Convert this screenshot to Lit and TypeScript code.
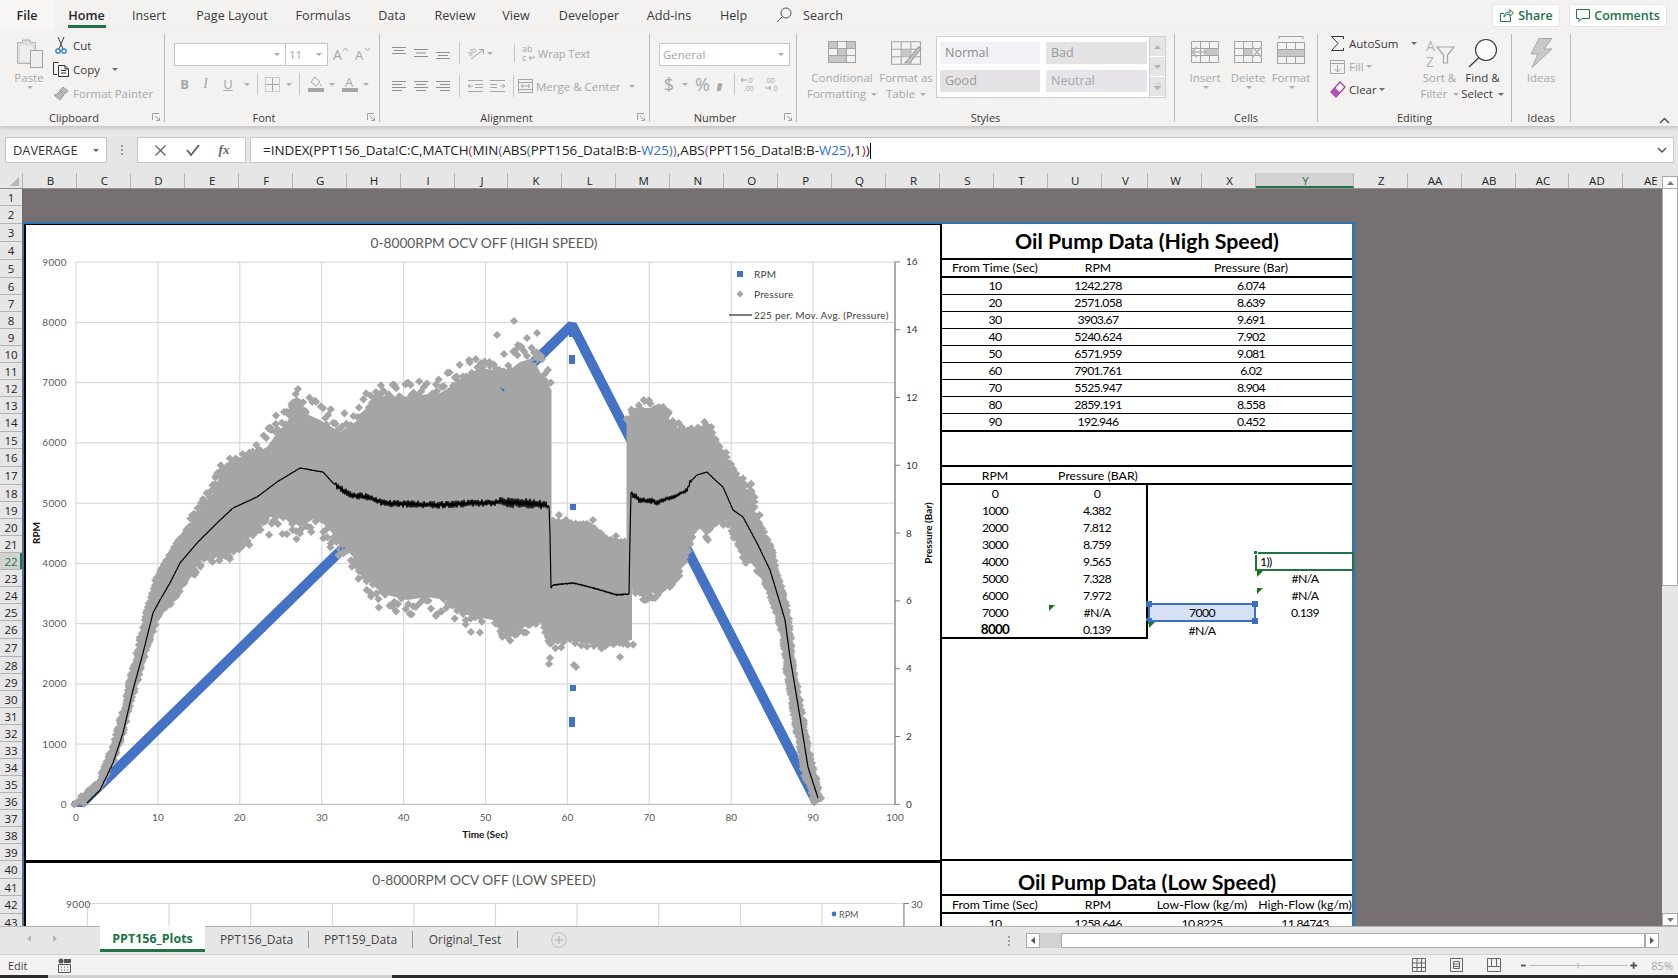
import { LitElement, html, svg, css } from 'lit'
import { customElement } from 'lit/decorators.js'

// sheet geometry, measured off the screenshot
const ROW_HEIGHTS = [17, 18, 18, 18, 18, 17, 17, 17, 17, 17, 17, 17, 17, 18, 17, 18, 18, 17, 17, 17, 17, 17, 17, 17, 17, 18, 18, 17, 17, 17, 17, 17, 17, 17, 17, 17, 17, 17, 17, 18, 17, 18, 17]
const COL_NAMES = 'B C D E F G H I J K L M N O P Q R S T U V W X Y Z AA AB AC AD AE'.split(' ')
const colWidth = (n: string) => (n === 'V' ? 46.4 : n === 'Y' ? 97.7 : 53.95)

const RIBBON_TABS: [string, number][] = [
  ['File', 54], ['Home', 65], ['Insert', 60], ['Page Layout', 106], ['Formulas', 76], ['Data', 62],
  ['Review', 64], ['View', 58], ['Developer', 88], ['Add-ins', 72], ['Help', 57],
]

// seeded so the scatter stays the same on every run
let seed = 1234567
const rnd = () => {
  seed = (seed * 16807) % 2147483647
  return seed / 2147483647
}

type P = [number, number]

const UPPER_A: P[] = [[75, 804], [100, 780], [113, 747], [123, 713], [133, 670], [143, 630], [148, 607], [157, 578], [173, 550], [182, 537], [197, 513], [213, 493], [222, 470], [233, 463], [252, 455], [267, 447], [277, 433], [287, 422], [297, 402], [302, 412], [320, 420], [340, 432], [363, 417], [377, 396], [400, 397], [440, 393], [450, 387], [463, 377], [480, 368], [507, 372], [520, 362], [533, 358], [540, 372], [551.5, 390]]
const UPPER_B: P[] = [[551.5, 522], [573, 523], [590, 525], [603, 537], [617, 543], [626.5, 540]]
const UPPER_C: P[] = [[626.5, 420], [643, 408], [660, 408], [670, 420], [680, 430], [697, 433], [707, 424], [712, 437], [727, 463], [740, 483], [750, 492], [755, 513], [770, 547], [777, 573], [787, 613], [792, 657], [800, 707], [808, 750], [817, 787], [821, 800]]
const LOWER_C: P[] = [[815, 803], [805, 773], [797, 730], [788, 677], [783, 633], [773, 600], [763, 577], [753, 560], [747, 558], [737, 540], [727, 520], [713, 523], [707, 535], [700, 520], [693, 533], [683, 560], [673, 580], [657, 590], [647, 595], [632, 590]]
const LOWER_B: P[] = [[632, 640], [620, 643], [593, 643], [573, 638], [550, 643], [543, 618], [523, 628], [507, 635], [493, 620]]
const LOWER_A: P[] = [[483, 618], [467, 615], [447, 600], [427, 597], [407, 600], [383, 594], [367, 580], [353, 557], [333, 534], [317, 517], [300, 527], [287, 517], [267, 517], [250, 537], [227, 557], [207, 554], [187, 577], [173, 600], [157, 617], [150, 637], [140, 667], [130, 704], [120, 740], [110, 767], [97, 790], [83, 805]]

const RAW_OUTLIERS: P[] = [[514, 321], [497, 335], [537, 333], [527, 338], [518, 345], [504, 354], [481, 363], [490, 366], [298, 389], [376, 392], [382, 393], [392, 398], [257, 455], [550, 658], [549, 664], [574, 665], [576, 667], [620, 657], [645, 600], [655, 598], [706, 537], [559, 515], [566, 520], [593, 520], [616, 536]]

const diamond = (x: number, y: number) => `M${x.toFixed(1)} ${(y - 4.1).toFixed(1)}l4.1 4.1-4.1 4.1-4.1-4.1z`

// markers spraying off the edge of the solid band
function scatter(pts: P[], dir: number, amp: (x: number) => number) {
  let d = ''
  for (let i = 0; i < pts.length - 1; i++) {
    const [x0, y0] = pts[i]
    const [x1, y1] = pts[i + 1]
    const n = Math.max(1, Math.floor(Math.hypot(x1 - x0, y1 - y0) / 2.5))
    for (let k = 0; k < n; k++) {
      const t = k / n
      const x = x0 + (x1 - x0) * t
      const y = y0 + (y1 - y0) * t
      const r = Math.pow(rnd(), 1.7)
      d += diamond(x + (rnd() - 0.5) * 3, y + dir * (r * amp(x) - 1))
    }
  }
  return d
}

const bandAmp = (x: number) => (x < 190 || x > 760 ? 1.5 : x < 260 ? 9 : 19)
const blockAmp = () => 3

const GRAY_POLY = [...UPPER_A, ...UPPER_B, ...UPPER_C, ...LOWER_C, ...LOWER_B, ...LOWER_A].map((p) => p.join(',')).join(' ')
const GRAY_MARKS =
  scatter(UPPER_A, -1, bandAmp) +
  scatter(UPPER_B, -1, blockAmp) +
  scatter(UPPER_C, -1, (x) => (x > 760 ? 1.5 : 10)) +
  scatter(LOWER_C, 1, (x) => (x > 760 ? 1.5 : 8)) +
  scatter(LOWER_B, 1, () => 8) +
  scatter(LOWER_A, 1, bandAmp) +
  RAW_OUTLIERS.map(([x, y]) => diamond(x, y)).join('')

const AVG_LINE: P[] = [[87, 803], [100, 790], [113, 763], [123, 733], [133, 690], [143, 653], [153, 613], [160, 600], [170, 583], [180, 563], [197, 543], [217, 523], [233, 508], [257, 497], [277, 482], [300, 468], [323, 472], [333, 483], [350, 495], [367, 497], [383, 503], [433, 505], [500, 502], [520, 503], [545, 505], [549, 506], [550, 533], [551, 588], [553, 585], [573, 583], [590, 587], [617, 595], [629, 594], [630, 537], [631, 493], [640, 500], [657, 502], [673, 497], [687, 490], [690, 482], [697, 475], [707, 472], [713, 478], [723, 487], [733, 510], [743, 517], [757, 543], [770, 570], [780, 603], [785, 620], [790, 657], [800, 717], [808, 767], [818, 798]]

const noiseAt = (x: number) => {
  if (x > 335 && x < 500) return 4
  if (x >= 500 && x < 548) return 5.5
  if (x > 631 && x < 660) return 3.6
  if (x >= 660 && x < 692) return 2.4
  if (x > 553 && x < 628) return 0.8
  return 0.25
}

const avgPath = () => {
  let d = ''
  let flip = 1
  AVG_LINE.forEach(([x, y], i) => {
    if (!i) {
      d = `M${x} ${y}`
      return
    }
    const [px, py] = AVG_LINE[i - 1]
    const n = Math.max(1, Math.floor(x - px))
    for (let k = 1; k <= n; k++) {
      const cx = px + ((x - px) * k) / n
      const cy = py + ((y - py) * k) / n
      flip = -flip
      d += `L${cx.toFixed(1)} ${(cy + flip * (0.4 + rnd() * 0.6) * noiseAt(cx)).toFixed(1)}`
    }
  })
  return d
}
const AVG_D = avgPath()

const caret = (cls = '') => html`<i class="caret ${cls}"></i>`

const lines = (rows: number[][], stroke = '#8f8f8f') => html`<svg class="ico" width="15" height="14" viewBox="0 0 15 14">
  ${rows.map(([x1, x2, y]) => svg`<path d="M${x1} ${y + 0.5}H${x2}" stroke=${stroke} fill="none"/>`)}
</svg>`

const launcher = html`<svg class="launcher" width="8" height="8" viewBox="0 0 8 8">
  <path d="M.5 7V.5H7M3 3l4 4M4.500 7.500h3v-3" fill="none" stroke="#a0a0a0"/>
</svg>`

const sheetGrid = (inner: unknown, w = 28, h = 22) => html`<svg class="ico" width=${w} height=${h} viewBox="0 0 28 22">
  <path d="M.5.5h27v21H.5zM.5 7.500h27M.5 14.500h27M9.500.5v21M18.500.5v21" fill="none" stroke="#a3a3a3"/>
  ${inner}
</svg>`

@customElement('app-root')
export class AppRoot extends LitElement {
  static styles = css`
    :host {
      display: block;
      width: 1678px;
      height: 978px;
      overflow: hidden;
      background: #f3f2f1;
      font-family: 'Open Sans', 'Noto Sans', sans-serif;
      font-size: 11.5px;
      color: #3b3a39;
    }
    .ico {
      display: block;
      flex: none;
      overflow: visible;
    }
    .caret {
      display: inline-block;
      width: 0;
      height: 0;
      border: 3px solid transparent;
      border-top: 3px solid #6b6b6b;
      border-bottom: 0;
      vertical-align: middle;
      margin-left: 2px;
    }
    .caret.off {
      border-top-color: #adadad;
    }
    .off {
      color: #a6a6a6;
    }

    /* ribbon tabs */
    .tabs {
      display: flex;
      align-items: center;
      height: 30px;
      font-size: 12.6px;
    }
    .tab {
      display: flex;
      align-items: center;
      justify-content: center;
      height: 30px;
      box-sizing: border-box;
      flex: none;
    }
    .tab.file {
      background: #f8f7f6;
      font-weight: 600;
      color: #262626;
    }
    .tab.home {
      position: relative;
      color: #262626;
      font-weight: 600;
    }
    .tab.home::after {
      content: '';
      position: absolute;
      left: 14px;
      right: 13px;
      bottom: 2px;
      height: 3px;
      background: #217346;
    }
    .search {
      display: flex;
      align-items: center;
      gap: 11px;
      margin-left: 14px;
    }
    .share-btns {
      display: flex;
      gap: 9px;
      margin-left: auto;
      margin-right: 11px;
    }
    .share {
      display: flex;
      align-items: center;
      justify-content: center;
      gap: 4px;
      height: 23px;
      box-sizing: border-box;
      background: #fff;
      border: 1px solid #e6e5e4;
      border-radius: 2px;
      color: #217346;
      font-size: 12.5px;
      font-weight: 600;
    }
    .share.a {
      width: 68px;
    }
    .share.b {
      width: 98px;
    }

    /* ribbon body */
    .ribbon {
      display: flex;
      height: 96px;
      box-sizing: border-box;
      padding-top: 4px;
      position: relative;
      z-index: 2;
      box-shadow: 0 2px 4px rgba(0, 0, 0, 0.16);
      background: #f3f2f1;
    }
    .group {
      flex: none;
      display: flex;
      flex-direction: column;
      height: 88px;
      box-sizing: border-box;
      border-right: 1px solid #b8b8b8;
    }
    .body {
      flex: 1;
      display: flex;
      min-height: 0;
    }
    .glabel {
      display: flex;
      align-items: center;
      height: 16px;
      margin-bottom: -3px;
      margin-top: -1px;
      font-size: 11px;
    }
    .glabel span {
      flex: 1;
      text-align: center;
    }
    .launcher {
      margin: 0 4px 0 4px;
    }
    .big {
      display: flex;
      flex-direction: column;
      align-items: center;
      flex: none;
      line-height: 16px;
      text-align: center;
      white-space: nowrap;
    }
    .big .icon-slot {
      display: flex;
      align-items: flex-start;
      justify-content: center;
      height: 34px;
      box-sizing: border-box;
      padding-top: 7px;
      margin-bottom: 2px;
    }
    .big .icon-slot.tall {
      padding-top: 4px;
    }
    .big .icon-slot.bracket {
      padding-top: 2px;
    }
    .clip {
      padding-left: 15px;
    }
    .clip .big {
      width: 28px;
    }
    .clip-list {
      margin: -1px 0 0 10px;
    }
    .clip-row {
      display: flex;
      align-items: center;
      gap: 4px;
      height: 24px;
    }
    .clip-row .slot {
      width: 16px;
      display: flex;
      justify-content: center;
    }
    .font-col {
      padding: 8px 0 0 9px;
      display: flex;
      flex-direction: column;
      gap: 6px;
    }
    .combo {
      display: flex;
      align-items: center;
      justify-content: space-between;
      height: 23px;
      box-sizing: border-box;
      padding: 0 5px 0 3px;
      background: #fff;
      border: 1px solid #c8c6c4;
      color: #a6a6a6;
      font-size: 11.5px;
    }
    .combo.name {
      width: 111px;
      border-right: 0;
    }
    .combo.size {
      width: 43px;
    }
    .combo.numfmt {
      width: 131px;
    }
    .tool-row {
      display: flex;
      align-items: center;
      height: 24px;
      color: #a6a6a6;
    }
    .tool-row .gsep {
      width: 1px;
      height: 22px;
      background: #c8c6c4;
      flex: none;
    }
    .glyph {
      font-size: 13px;
      text-align: center;
      flex: none;
    }
    .glyph.b {
      font-weight: 700;
      width: 21px;
      margin-left: 0;
    }
    .glyph.i {
      font-style: italic;
      font-family: 'Liberation Serif', serif;
      width: 21px;
      font-size: 14px;
    }
    .glyph.u {
      text-decoration: underline;
      width: 24px;
    }
    .glyph.comma {
      font-size: 26px;
      font-weight: 800;
      margin: -14px 0 0 6px;
      line-height: 16px;
    }
    .align-grid {
      padding: 7px 0 0 12px;
      display: flex;
      flex-direction: column;
      gap: 9px;
    }
    .align-row {
      display: flex;
      align-items: center;
      height: 24px;
      color: #a6a6a6;
    }
    .align-row .ico + .ico {
      margin-left: 7px;
    }
    .vbar {
      width: 1px;
      height: 22px;
      background: #c8c6c4;
      margin: 0 8px;
      flex: none;
    }
    .wrapcol {
      display: flex;
      align-items: center;
      gap: 2px;
      margin-left: 21px;
      padding-left: 7px;
      border-left: 1px solid #c8c6c4;
      font-size: 11px;
    }
    .mergecol {
      display: flex;
      align-items: center;
      gap: 3px;
      margin-left: -3px;
    }
    .number-col {
      padding: 8px 0 0 9px;
      display: flex;
      flex-direction: column;
      gap: 6px;
    }
    .styles {
      padding: 0 0 0 10px;
    }
    .styles .big {
      width: 70px;
      color: #a6a6a6;
    }
    .styles .big + .big {
      margin-left: -6px;
    }
    .gallery {
      display: flex;
      margin: 2px 0 0 -5px;
      height: 62px;
      box-sizing: border-box;
      background: #fff;
      border: 1px solid #d2d0ce;
    }
    .cells {
      display: grid;
      grid-template-columns: 100px 101px;
      grid-auto-rows: 22px;
      gap: 6px;
      padding: 5px 2px 0 3px;
    }
    .st {
      padding-left: 5px;
      line-height: 21px;
      font-size: 12.5px;
      color: #8e8e8e;
    }
    .st.normal {
      background: #f4f1f6;
      color: #8a8a8a;
    }
    .st.shade {
      background: #e4e2e4;
      color: #9a9a9a;
    }
    .st.tint {
      background: #e8e5ea;
      color: #a5a5a5;
    }
    .scroll3 {
      display: flex;
      flex-direction: column;
      width: 15px;
      background: #e6e5e4;
      border-left: 1px solid #d2d0ce;
    }
    .scroll3 i {
      flex: 1;
      display: flex;
      align-items: center;
      justify-content: center;
      border-bottom: 1px solid #fff;
    }
    .cellsgroup {
      padding-left: 9px;
    }
    .cellsgroup .big {
      width: 42px;
      color: #a6a6a6;
    }
    .cellsgroup .big + .big {
      margin-left: 1px;
    }
    .editing {
      padding-left: 12px;
    }
    .edit-list {
      width: 88px;
      margin-top: -2px;
    }
    .edit-row {
      display: flex;
      align-items: center;
      gap: 4px;
      height: 23px;
    }
    .edit-row .slot {
      width: 15px;
      display: flex;
      justify-content: center;
    }
    .edit-row .caret {
      margin-left: -2px;
    }
    .edit-row .caret.far {
      margin-left: 9px;
    }
    .editing .big {
      width: 43px;
    }
    .ideas {
      justify-content: center;
    }
    .ideas .big {
      width: 100%;
    }
    .collapse {
      align-self: flex-end;
      margin: 0 8px 2px auto;
    }

    /* formula bar */
    .fbar {
      display: flex;
      height: 47px;
      box-sizing: border-box;
      padding: 11px 4px 0 5px;
      background: #e6e6e6;
      align-items: flex-start;
    }
    .fbox {
      display: flex;
      align-items: center;
      height: 26px;
      box-sizing: border-box;
      background: #fff;
      border: 1px solid #c8c6c4;
      flex: none;
    }
    .namebox {
      width: 102px;
      justify-content: space-between;
      padding: 0 7px;
      font-size: 12.8px;
      color: #333;
    }
    .dots {
      width: 30px;
      display: flex;
      flex-direction: column;
      align-items: center;
      justify-content: center;
      gap: 2px;
      height: 26px;
      flex: none;
    }
    .dots i {
      width: 2px;
      height: 2px;
      background: #a0a0a0;
    }
    .fxbox {
      width: 109px;
      justify-content: space-around;
      padding: 0 6px;
    }
    .fx {
      font-family: 'Liberation Serif', serif;
      font-style: italic;
      font-weight: 700;
      font-size: 13px;
      color: #666;
    }
    .formula {
      flex: 1;
      margin-left: 4px;
      padding-left: 12px;
      font-size: 13.4px;
      color: #222;
      justify-content: space-between;
      padding-right: 6px;
      white-space: pre;
    }
    .formula .cursor {
      display: inline-block;
      width: 1px;
      height: 16px;
      background: #000;
      vertical-align: -4px;
    }
    .p-red { color: #c8143c; }
    .p-purple { color: #8a3fb0; }
    .p-green { color: #1e8a4a; }
    .p-blue { color: #2f6fce; }

    /* sheet */
    .workarea {
      display: flex;
      height: 753px;
    }
    .sheetwrap {
      width: 1662px;
      flex: none;
      display: flex;
      flex-direction: column;
    }
    .colhead {
      display: flex;
      height: 16px;
      background: #e6e6e6;
      border-bottom: 1px solid #8f8f8f;
      box-sizing: border-box;
      overflow: hidden;
      flex: none;
    }
    .corner {
      width: 23px;
      flex: none;
      display: flex;
      align-items: flex-end;
      justify-content: flex-end;
      padding: 0 3px 2px 0;
      box-sizing: border-box;
      border-right: 1px solid #b3b3b3;
    }
    .ch {
      flex: none;
      box-sizing: border-box;
      border-right: 1px solid #b3b3b3;
      padding-left: 2px;
      text-align: center;
      font-size: 11.5px;
      line-height: 15px;
      color: #222;
    }
    .ch.on {
      background: #d2d2d2;
      color: #217346;
      border-bottom: 2px solid #217346;
    }
    .sheetbody {
      display: flex;
      height: 737px;
      overflow: hidden;
    }
    .rowhead {
      width: 23px;
      flex: none;
      background: #e6e6e6;
      border-right: 1px solid #6e6e6e;
      box-sizing: border-box;
    }
    .rh {
      box-sizing: border-box;
      border-bottom: 1px solid #b3b3b3;
      text-align: center;
      font-size: 11.5px;
      color: #222;
      display: flex;
      align-items: center;
      justify-content: center;
    }
    .rh.on {
      background: #d2d2d2;
      color: #217346;
      box-shadow: inset -2px 0 0 #217346;
    }
    .canvas {
      flex: 1;
      background: #767170;
      padding-top: 33px;
      overflow: hidden;
    }
    .board {
      width: 1332px;
      box-sizing: border-box;
      border-top: 2px solid #2e75b6;
      border-right: 3px solid #2e75b6;
      border-left: 1px solid #2e75b6;
      background: #fff;
      display: grid;
      grid-template-columns: 918px 410px;
      color: #000;
    }
    .plots {
      box-sizing: border-box;
      border-left: 2px solid #000;
      border-right: 2px solid #000;
      border-top: 1px solid #000;
    }
    .plots svg {
      display: block;
    }
    .plots .low {
      border-top: 3px solid #000;
    }
    .plots text {
      font-family: Lato, 'Liberation Sans', sans-serif;
      font-size: 10px;
      fill: #595959;
    }
    .plots text.ctitle {
      font-size: 13.7px;
      text-anchor: middle;
    }
    .plots text.axt {
      font-size: 10px;
      font-weight: 700;
      fill: #111;
      text-anchor: middle;
    }
    .plots text.leg {
      fill: #404040;
      letter-spacing: 0.25px;
    }
    .grid {
      font-family: Lato, 'Liberation Sans', sans-serif;
      font-size: 12.3px;
    }
    .tr {
      display: grid;
      grid-template-columns: 106px 100px 108px 98px;
      box-sizing: border-box;
      text-align: center;
      align-items: center;
    }
    .tr.l1 {
      border-bottom: 1px solid #000;
    }
    .tr.l2 {
      border-bottom: 2px solid #000;
    }
    .tr.up {
      padding-bottom: 1px;
    }
    .tr.num {
      letter-spacing: -0.65px;
    }
    .tr .span2 {
      grid-column: span 2;
    }
    .tr .all {
      grid-column: 1 / 4;
      width: 410px;
    }
    .title {
      font-size: 21.3px;
      font-weight: 700;
      line-height: 30px;
    }
    .title.lowt {
      padding-top: 6px;
    }
    .cell {
      position: relative;
      height: 100%;
      display: flex;
      align-items: center;
      justify-content: center;
      box-sizing: border-box;
    }
    .cell.rb {
      border-right: 2px solid #000;
    }
    .cell.bb {
      border-bottom: 2px solid #000;
    }
    .cell.strong {
      font-weight: 700;
      font-size: 13.4px;
    }
    .flag::before {
      content: '';
      position: absolute;
      left: 1px;
      top: 1px;
      border: 3px solid transparent;
      border-top-color: #107c10;
      border-left-color: #107c10;
    }
    .picked {
      background: #d6e2f4;
    }
    .picked .frame {
      position: absolute;
      inset: -1px 0 -1px 0;
      border: 2px solid #3a6fc4;
      pointer-events: none;
    }
    .frame b {
      position: absolute;
      width: 6px;
      height: 6px;
      background: #3a6fc4;
    }
    .frame b:nth-child(1) { left: -4px; top: -4px; }
    .frame b:nth-child(2) { right: -4px; top: -4px; }
    .frame b:nth-child(3) { left: -4px; bottom: -4px; }
    .frame b:nth-child(4) { right: -4px; bottom: -4px; }
    .current {
      justify-content: flex-start;
      padding-left: 4px;
    }
    .current .frame {
      position: absolute;
      inset: -1px 0 -1px -1px;
      border: 2px solid #217346;
    }
    .current .frame b {
      position: absolute;
      right: -3px;
      bottom: -3px;
      width: 5px;
      height: 5px;
      background: #217346;
      border: 1px solid #fff;
      box-sizing: border-box;
    }
    .vscroll {
      width: 16px;
      flex: none;
      background: #e6e6e6;
      display: flex;
      flex-direction: column;
      padding-top: 3px;
      box-sizing: border-box;
    }
    .vbtn {
      height: 13px;
      flex: none;
      background: #fff;
      border: 1px solid #aaa;
      box-sizing: border-box;
      display: flex;
      align-items: center;
      justify-content: center;
    }
    .vthumb {
      height: 397px;
      background: #fff;
      border: 1px solid #aaa;
      border-top: 0;
      box-sizing: border-box;
      flex: none;
    }
    .vbtn.down {
      margin-top: auto;
    }

    /* sheet tabs */
    .sheettabs {
      display: flex;
      align-items: flex-start;
      height: 29px;
      box-sizing: border-box;
      background: #e6e6e6;
      border-top: 1px solid #b3b3b3;
      border-bottom: 1px solid #d2d2d2;
      font-size: 12px;
      color: #444;
    }
    .tnav {
      width: 100px;
      flex: none;
      display: flex;
      align-items: center;
      gap: 22px;
      padding: 8px 0 0 27px;
      box-sizing: border-box;
    }
    .stab {
      flex: none;
      margin-top: 4px;
      height: 17px;
      line-height: 17px;
      text-align: center;
      border-right: 1px solid #9a9a9a;
    }
    .stab.on {
      margin-top: -1px;
      height: 26px;
      line-height: 26px;
      background: #fff;
      border: 0;
      border-bottom: 3px solid #217346;
      color: #217346;
      font-weight: 700;
      font-size: 12.5px;
      box-sizing: border-box;
    }
    .plus {
      width: 16px;
      height: 16px;
      margin: 5px 0 0 33px;
      flex: none;
    }
    .hscroll {
      display: flex;
      align-items: flex-start;
      margin-left: auto;
      padding: 6px 19px 0 0;
    }
    .hdots {
      display: flex;
      flex-direction: column;
      gap: 2px;
      margin: 3px 16px 0 0;
    }
    .hdots i {
      width: 2px;
      height: 2px;
      background: #a0a0a0;
    }
    .hbtn {
      width: 14px;
      height: 15px;
      box-sizing: border-box;
      background: #fff;
      border: 1px solid #aaa;
      display: flex;
      align-items: center;
      justify-content: center;
      flex: none;
    }
    .htrack {
      width: 21px;
      height: 15px;
      background: #d2d2d2;
      flex: none;
    }
    .hthumb {
      width: 584px;
      height: 15px;
      background: #fff;
      border: 1px solid #aaa;
      box-sizing: border-box;
      flex: none;
    }

    /* status bar */
    .status {
      display: flex;
      align-items: center;
      height: 20px;
      font-size: 11px;
      padding-left: 8px;
      color: #444;
    }
    .status .macro {
      margin-left: 30px;
    }
    .views {
      display: flex;
      align-items: center;
      margin-left: auto;
      padding-right: 5px;
    }
    .views .ico + .ico {
      margin-left: 24px;
    }
    .zoomer {
      display: flex;
      align-items: center;
      margin-left: 20px;
    }
    .pct {
      color: #a6a6a6;
      margin-left: 14px;
      font-size: 11px;
    }
    .strip {
      display: flex;
      height: 3px;
      background: #2b2b2b;
    }
    .strip i {
      margin-left: 48px;
      width: 344px;
      background: #cfcfcf;
    }
  `

  private leftChart() {
    const vx = Array.from({ length: 11 }, (_, i) => 76 + i * 81.9)
    const hy = Array.from({ length: 10 }, (_, i) => 804.3 - i * 60.25)
    const rightTicks = Array.from({ length: 9 }, (_, i) => [804.3 - i * 67.8, i * 2])
    return svg`
      <svg width="914" height="635" viewBox="26 225 914 635">
        <text class="ctitle" x="484" y="248">0-8000RPM OCV OFF (HIGH SPEED)</text>
        ${vx.map((x) => svg`<path d="M${x} 262V804" stroke="#d9d9d9" stroke-width="1.2"/>`)}
        ${hy.map((y) => svg`<path d="M76 ${y}H895" stroke="#d9d9d9" stroke-width="1.2"/>`)}
        <path d="M76 804.5H895" stroke="#bfbfbf" stroke-width="1.2"/>
        <path d="M895 262V805" stroke="#808080" stroke-width="1.2"/>
        ${rightTicks.map(([y, v]) => svg`
          <path d="M895 ${y}h5" stroke="#808080"/>
          <text x="906" y=${y + 3.5} style="fill:#333">${v}</text>`)}
        ${hy.map((y, i) => svg`<text x="67" y=${y + 3.5} text-anchor="end" style="letter-spacing:.4px">${i * 1000}</text>`)}
        ${vx.map((x, i) => svg`<text x=${x} y="821" text-anchor="middle">${i * 10}</text>`)}
        <text class="axt" x="485" y="838">Time (Sec)</text>
        <text class="axt" transform="translate(40 533) rotate(-90)">RPM</text>
        <text class="axt" transform="translate(932 533) rotate(-90)">Pressure (Bar)</text>

        <rect x="72" y="801" width="13" height="6" fill="#4472c4"/>
        <path d="M82 803L572 325L817 803" fill="none" stroke="#4472c4" stroke-width="10" stroke-linejoin="bevel"/>
        <rect x="569" y="330" width="6" height="7" fill="#4472c4"/>
        <rect x="569" y="355" width="6" height="9" fill="#4472c4"/>
        <rect x="570" y="504" width="6" height="6" fill="#4472c4"/>
        <rect x="570" y="685" width="6" height="6" fill="#4472c4"/>
        <rect x="569" y="717" width="6" height="10" fill="#4472c4"/>

        <polygon points=${GRAY_POLY} fill="#a5a5a5"/>
        <path d=${GRAY_MARKS} fill="#a5a5a5"/>
        <path d="M500 387l5 3-2 2zM531 362l5-2 1 3z" fill="#4472c4"/>
        <path d="M340 547l3 1-3 3zM622 426l5 3-3 4z" fill="#4472c4"/>
        <path d=${AVG_D} fill="none" stroke="#000" stroke-width="1.200" stroke-linejoin="bevel"/>

        <rect x="737" y="271" width="6" height="6" fill="#4472c4"/>
        <text class="leg" x="754" y="278">RPM</text>
        <path d="M740 290.500l3.500 3.500-3.500 3.500-3.500-3.500z" fill="#a5a5a5"/>
        <text class="leg" x="754" y="298">Pressure</text>
        <path d="M729 315H752" stroke="#000" stroke-width="1"/>
        <text class="leg" x="754" y="319">225 per. Mov. Avg. (Pressure)</text>
      </svg>`
  }

  private lowChart() {
    const vx = Array.from({ length: 11 }, (_, i) => 87.5 + i * 81.6)
    return svg`
      <svg class="low" width="914" height="80" viewBox="26 862 914 80">
        <text class="ctitle" x="484" y="884">0-8000RPM OCV OFF (LOW SPEED)</text>
        ${vx.map((x) => svg`<path d="M${x} 902V926" stroke="#d9d9d9" stroke-width="1.2"/>`)}
        <path d="M87 902.500H904" stroke="#d9d9d9" stroke-width="1.2"/>
        <path d="M904 902v24M904 902.500h5" stroke="#808080" fill="none"/>
        <text x="66" y="906.500" style="letter-spacing:.4px">9000</text>
        <text x="911" y="906.500">30</text>
        <circle cx="834" cy="913" r="2.400" fill="#4472c4"/>
        <text x="839" y="916.500" style="font-size:9px">RPM</text>
      </svg>`
  }

  private highRows() {
    const data = [
      ['10', '1242.278', '6.074'], ['20', '2571.058', '8.639'], ['30', '3903.67', '9.691'],
      ['40', '5240.624', '7.902'], ['50', '6571.959', '9.081'], ['60', '7901.761', '6.02'],
      ['70', '5525.947', '8.904'], ['80', '2859.191', '8.558'], ['90', '192.946', '0.452'],
    ]
    return data.map((r, i) => {
      const last = i === data.length - 1
      return html`<div class="tr num up ${last ? 'l2' : 'l1'}" style="height:${last ? 18 : 17}px">
        <div>${r[0]}</div><div>${r[1]}</div><div class="span2">${r[2]}</div>
      </div>`
    })
  }

  private pressureRows() {
    const data: [string, string, number][] = [
      ['0', '0', 17], ['1000', '4.382', 17], ['2000', '7.812', 17], ['3000', '8.759', 17], ['4000', '9.565', 17],
      ['5000', '7.328', 17], ['6000', '7.972', 17], ['7000', '#N/A', 17], ['8000', '0.139', 18],
    ]
    const sideCells = (i: number) => {
      if (i === 4) return html`<div></div><div class="cell current"><span>1))</span><span class="frame"><b></b></span></div>`
      if (i === 5) return html`<div></div><div class="cell flag">#N/A</div>`
      if (i === 6) return html`<div></div><div class="cell flag">#N/A</div>`
      if (i === 7) return html`<div class="cell picked">7000<span class="frame"><b></b><b></b><b></b><b></b></span></div><div class="cell">0.139</div>`
      if (i === 8) return html`<div class="cell flag">#N/A</div><div></div>`
      return html`<div></div><div></div>`
    }
    return data.map(([a, b, h], i) => {
      const end = i === data.length - 1
      return html`<div class="tr num" style="height:${h}px">
        <div class="cell ${end ? 'bb strong' : ''}">${a}</div>
        <div class="cell rb ${end ? 'bb' : ''} ${i === 7 ? 'flag' : ''}">${b}</div>
        ${sideCells(i)}
      </div>`
    })
  }

  private tables() {
    return html`<div class="grid">
      <div class="tr l2 title" style="height:36px"><div class="all">Oil Pump Data (High Speed)</div></div>
      <div class="tr l2 up" style="height:18px">
        <div>From Time (Sec)</div><div>RPM</div><div class="span2">Pressure (Bar)</div>
      </div>
      ${this.highRows()}
      <div class="tr l2" style="height:35px"></div>
      <div class="tr l2" style="height:18px"><div>RPM</div><div>Pressure (BAR)</div></div>
      ${this.pressureRows()}
      <div class="tr l2" style="height:222px"></div>
      <div class="tr l2 title lowt" style="height:35px"><div class="all">Oil Pump Data (Low Speed)</div></div>
      <div class="tr l2" style="height:18px">
        <div>From Time (Sec)</div><div>RPM</div><div>Low-Flow (kg/m)</div><div>High-Flow (kg/m)</div>
      </div>
      <div class="tr num" style="height:18px">
        <div>10</div><div>1258.646</div><div>10.8225</div><div>11.84743</div>
      </div>
    </div>`
  }

  private ribbon() {
    const gray = '#a6a6a6'
    return html`<div class="ribbon">
      <div class="group" style="width:165px">
        <div class="body clip">
          <div class="big off">
            <div class="icon-slot tall">
              <svg class="ico" width="27" height="30" viewBox="0 0 27 30">
                <path d="M1.500 4.500h5V2h8v2.500h5v21h-18z" fill="#dedddc" stroke="#b5b5b5"/>
                <path d="M4 7.500h13v16H4z" fill="#efeeed"/>
                <rect x="14.500" y="12.500" width="12" height="17" fill="#efeeed" stroke="#a6a6a6"/>
              </svg>
            </div>
            <span>Paste</span>
            ${caret('off')}
          </div>
          <div class="clip-list">
            <div class="clip-row">
              <span class="slot"><svg class="ico" width="12" height="17" viewBox="0 0 12 17">
                <path d="M3 0l5 12M9 0L4 12" fill="none" stroke="#444" stroke-width="1"/>
                <circle cx="3" cy="14" r="2.200" fill="none" stroke="#2b7cd3" stroke-width="1.300"/>
                <circle cx="9" cy="14" r="2.200" fill="none" stroke="#2b7cd3" stroke-width="1.300"/>
              </svg></span>
              <span>Cut</span>
            </div>
            <div class="clip-row">
              <span class="slot"><svg class="ico" width="16" height="16" viewBox="0 0 16 16">
                <path d="M5.500 1.500H.5v12h3.500M5.500 4.500v11h10V8l-3.500-3.500zM12 4.500V8h3.500M8 9.500h5M8 12h5" fill="none" stroke="#333"/>
              </svg></span>
              <span>Copy</span><i class="caret" style="margin-left:8px"></i>
            </div>
            <div class="clip-row off">
              <span class="slot"><svg class="ico" width="16" height="15" viewBox="0 0 16 15">
                <path d="M10 1l5 4-3 3-5-4zM7 5l4 4-4 5-6-5 3-1z" fill="#b8b8b8" stroke="#9c9c9c"/>
              </svg></span>
              <span>Format Painter</span>
            </div>
          </div>
        </div>
        <div class="glabel"><span>Clipboard</span>${launcher}</div>
      </div>

      <div class="group" style="width:215px">
        <div class="body font-col">
          <div class="tool-row">
            <div class="combo name"><span></span>${caret('off')}</div>
            <div class="combo size"><span>11</span>${caret('off')}</div>
            <svg class="ico" style="margin-left:5px" width="38" height="16" viewBox="0 0 38 16">
              <text x="0" y="14" font-size="14" fill=${gray}>A</text><path d="M10 5l2.500-3 2.500 3" fill="none" stroke=${gray}/>
              <text x="22" y="14" font-size="13" fill=${gray}>A</text><path d="M32 2l2.500 3 2.500-3" fill="none" stroke=${gray}/>
            </svg>
          </div>
          <div class="tool-row">
            <span class="glyph b">B</span>
            <span class="glyph i">I</span>
            <span class="glyph u">U</span><i class="caret off" style="margin-left:4px"></i>
            <span class="gsep" style="margin:0 7px 0 7px"></span>
            <svg class="ico" width="15" height="15" viewBox="0 0 15 15">
              <path d="M.5.5h14v14H.5z" fill="none" stroke=${gray} stroke-dasharray="1 1"/>
              <path d="M7.500 1v13M1 7.500h13" stroke=${gray}/>
            </svg><i class="caret off" style="margin-left:6px"></i>
            <span class="gsep" style="margin:0 8px 0 7px"></span>
            <svg class="ico" width="16" height="16" viewBox="0 0 16 16">
              <path d="M7 1l5 5-4 4-5-4zM12 8l1.500 2.500" fill="none" stroke=${gray}/>
              <rect x="0" y="12" width="16" height="4" fill=${gray}/>
            </svg><i class="caret off" style="margin-left:5px"></i>
            <svg class="ico" style="margin-left:7px" width="16" height="16" viewBox="0 0 16 16">
              <text x="3" y="11" font-size="13" fill=${gray}>A</text>
              <rect x="0" y="12" width="16" height="4" fill=${gray}/>
            </svg><i class="caret off" style="margin-left:5px"></i>
          </div>
        </div>
        <div class="glabel"><span>Font</span>${launcher}</div>
      </div>

      <div class="group" style="width:270px">
        <div class="body align-grid">
          <div class="align-row">
            ${lines([[0, 14, 1], [2, 12, 4], [0, 14, 7]])}
            ${lines([[0, 14, 3], [2, 12, 6.5], [0, 14, 10]])}
            ${lines([[0, 14, 6], [2, 12, 9], [0, 14, 12]])}
            <span class="vbar"></span>
            <svg class="ico" width="17" height="16" viewBox="0 0 17 16">
              <text x="0" y="9" font-size="8" fill=${gray} transform="rotate(-40 5 8)">ab</text>
              <path d="M3 14L15 5M11 4.500h4.500V9" fill="none" stroke=${gray}/>
            </svg>
            ${caret('off')}
            <span class="wrapcol">
              <svg class="ico" width="14" height="18" viewBox="0 0 14 18">
                <text x="0" y="8" font-size="9" fill=${gray}>ab</text>
                <text x="0" y="17" font-size="9" fill=${gray}>c</text>
                <path d="M7 14h5v-2M7 14l2-2M7 14l2 2" fill="none" stroke=${gray}/>
              </svg>
              Wrap Text
            </span>
          </div>
          <div class="align-row">
            ${lines([[0, 14, 2], [0, 10, 5], [0, 14, 8], [0, 10, 11]])}
            ${lines([[0, 14, 2], [2, 12, 5], [0, 14, 8], [2, 12, 11]])}
            ${lines([[0, 14, 2], [4, 14, 5], [0, 14, 8], [4, 14, 11]])}
            <span class="vbar"></span>
            <svg class="ico" width="15" height="14" viewBox="0 0 15 14">
              <path d="M0 1.500h15M7 5.500h8M7 8.500h8M0 12.500h15M5 7H0l2.500-2M0 7l2.500 2" fill="none" stroke=${gray}/>
            </svg>
            <svg class="ico" style="margin-left:7px" width="15" height="14" viewBox="0 0 15 14">
              <path d="M0 1.500h15M0 5.500h7M0 8.500h7M0 12.500h15M10 7h5l-2.500-2M15 7l-2.500 2" fill="none" stroke=${gray}/>
            </svg>
            <span class="vbar" style="margin:0 7px 0 8px"></span>
            <span class="mergecol">
              <svg class="ico" width="15" height="14" viewBox="0 0 15 14">
                <path d="M.5.5h14v13H.5zM.5 3.500h14M.5 10.500h14M3 7h9M3 7l2-2M3 7l2 2M12 7l-2-2M12 7l-2 2" fill="none" stroke=${gray}/>
              </svg>
              Merge &amp; Center <i class="caret off" style="margin-left:5px"></i>
            </span>
          </div>
        </div>
        <div class="glabel"><span>Alignment</span>${launcher}</div>
      </div>

      <div class="group" style="width:147px">
        <div class="body number-col">
          <div class="tool-row">
            <div class="combo numfmt"><span>General</span>${caret('off')}</div>
          </div>
          <div class="tool-row" style="padding-left:2px">
            <span class="glyph" style="font-size:18px;width:16px">$</span><i class="caret off" style="margin-left:5px"></i>
            <span class="glyph" style="font-size:18px;margin-left:7px">%</span>
            <span class="glyph comma">,</span>
            <span class="gsep" style="margin:0 6px 0 10px"></span>
            <svg class="ico" width="39" height="16" viewBox="0 0 39 16">
              <text x="6" y="7" font-size="7" fill=${gray}>.0</text>
              <path d="M0 4h6M0 4l2-2M0 4l2 2" fill="none" stroke=${gray}/>
              <text x="3" y="15" font-size="7" fill=${gray}>.00</text>
              <text x="24" y="7" font-size="7" fill=${gray}>.00</text>
              <path d="M24 12h6M30 12l-2-2M30 12l-2 2" fill="none" stroke=${gray}/>
              <text x="31" y="15" font-size="7" fill=${gray}>.0</text>
            </svg>
          </div>
        </div>
        <div class="glabel"><span>Number</span>${launcher}</div>
      </div>

      <div class="group" style="width:378px">
        <div class="body styles">
          <div class="big">
            <div class="icon-slot">
              ${sheetGrid(svg`<path d="M1 1h8v6H1zM10 8h8v6h-8zM1 15h17v6H1zM19 1h8v6h-8z" fill="#c6c6c6"/>`)}
            </div>
            <span>Conditional</span>
            <span>Formatting ${caret('off')}</span>
          </div>
          <div class="big">
            <div class="icon-slot">
              ${sheetGrid(svg`<path d="M10 8h8v6h-8z" fill="#c6c6c6"/><path d="M26 5L17 16l-4 4c3 1 6 0 7-3l8-10z" fill="#c6c6c6" stroke="#9c9c9c"/>`, 30, 24)}
            </div>
            <span>Format as</span>
            <span>Table ${caret('off')}</span>
          </div>
          <div class="gallery">
            <div class="cells">
              <div class="st normal">Normal</div>
              <div class="st shade">Bad</div>
              <div class="st shade">Good</div>
              <div class="st tint">Neutral</div>
            </div>
            <div class="scroll3">
              <i><svg width="7" height="4" viewBox="0 0 7 4"><path d="M0 4l3.500-4L7 4z" fill="#b5b5b5"/></svg></i>
              <i><svg width="7" height="4" viewBox="0 0 7 4"><path d="M0 0l3.500 4L7 0z" fill="#b5b5b5"/></svg></i>
              <i><svg width="7" height="7" viewBox="0 0 7 7"><path d="M0 .5h7M0 3l3.500 4L7 3z" fill="#b5b5b5" stroke="#b5b5b5" stroke-width=".5"/></svg></i>
            </div>
          </div>
        </div>
        <div class="glabel"><span>Styles</span></div>
      </div>

      <div class="group" style="width:143px">
        <div class="body cellsgroup">
          <div class="big">
            <div class="icon-slot">
              ${sheetGrid(svg`<path d="M13 8h15v6H13z" fill="#c6c6c6"/><path d="M16 11H1M1 11l5-5M1 11l5 5" fill="none" stroke="#b5b5b5" stroke-width="1.500"/>`, 30, 22)}
            </div>
            <span>Insert</span>
            ${caret('off')}
          </div>
          <div class="big">
            <div class="icon-slot">
              ${sheetGrid(svg`<path d="M10 8h9v6h-9z" fill="#c6c6c6"/><path d="M18 5l10 12M28 5L18 17" fill="none" stroke="#b5b5b5" stroke-width="1.500"/>`, 30, 22)}
            </div>
            <span>Delete</span>
            ${caret('off')}
          </div>
          <div class="big">
            <div class="icon-slot bracket">
              <svg class="ico" width="28" height="28" viewBox="0 0 28 28">
                <path d="M.5 6.500h27v21H.5zM.5 13.500h27M.5 20.500h27M9.500 6.500v21M18.500 6.500v21M2 .5h24M2 0v3M26 0v3" fill="none" stroke="#a3a3a3"/>
                <path d="M1 14h26v6H1z" fill="#c6c6c6"/>
              </svg>
            </div>
            <span>Format</span>
            ${caret('off')}
          </div>
        </div>
        <div class="glabel"><span>Cells</span></div>
      </div>

      <div class="group" style="width:194px">
        <div class="body editing">
          <div class="edit-list">
            <div class="edit-row">
              <span class="slot"><svg class="ico" width="13" height="15" viewBox="0 0 13 15">
                <path d="M12.500 3V.5H.5L7 7.500.5 14.500h12V12" fill="none" stroke="#333"/>
              </svg></span>
              <span>AutoSum</span>
              <i class="caret far"></i>
            </div>
            <div class="edit-row off">
              <span class="slot"><svg class="ico" width="15" height="14" viewBox="0 0 15 14">
                <path d="M.5.5h14v13H.5zM.5 3.500h14M7.500 5v7M4.500 9l3 3 3-3" fill="none" stroke="#a6a6a6"/>
              </svg></span>
              <span>Fill</span>${caret('off')}
            </div>
            <div class="edit-row">
              <span class="slot"><svg class="ico" width="16" height="17" viewBox="0 0 16 17">
                <path d="M10 1l5 5-9 10-5-5z" fill="#fff" stroke="#a83ea8" stroke-width="1.300"/>
                <path d="M5 6.500l5 5-4 4.500-5-5z" fill="#b74fb7"/>
              </svg></span>
              <span>Clear</span>${caret('')}
            </div>
          </div>
          <div class="big off">
            <div class="icon-slot tall">
              <svg class="ico" width="30" height="30" viewBox="0 0 30 30">
                <text x="1" y="13" font-size="14" fill="#b5b5b5">A</text>
                <text x="1" y="29" font-size="14" fill="#b5b5b5">Z</text>
                <path d="M12 9h17l-6.500 8v8h-4v-8z" fill="none" stroke="#a6a6a6" stroke-width="1.200"/>
              </svg>
            </div>
            <span>Sort &amp;</span>
            <span>Filter ${caret('off')}</span>
          </div>
          <div class="big">
            <div class="icon-slot tall">
              <svg class="ico" width="30" height="30" viewBox="0 0 30 30">
                <circle cx="18" cy="12" r="10.500" fill="#fbfbfb" stroke="#333" stroke-width="1.100"/>
                <path d="M10.500 20L1 29" stroke="#333" stroke-width="1.100"/>
              </svg>
            </div>
            <span>Find &amp;</span>
            <span>Select ${caret('')}</span>
          </div>
        </div>
        <div class="glabel"><span>Editing</span></div>
      </div>

      <div class="group" style="width:59px">
        <div class="body ideas">
          <div class="big off">
            <div class="icon-slot tall">
              <svg class="ico" width="23" height="30" viewBox="0 0 23 30">
                <path d="M9 .5h13L14 11h8L2 29.500 8 16H1z" fill="#c9c9c9" stroke="#a8a8a8"/>
              </svg>
            </div>
            <span>Ideas</span>
          </div>
        </div>
        <div class="glabel"><span>Ideas</span></div>
      </div>

      <svg class="collapse" width="11" height="7" viewBox="0 0 11 7">
        <path d="M1 6l4.500-4.500L10 6" fill="none" stroke="#555" stroke-width="1.500"/>
      </svg>
    </div>`
  }

  render() {
    return html`
      <div class="tabs">
        ${RIBBON_TABS.map(([name, w]) => html`<div
          class="tab ${name === 'File' ? 'file' : name === 'Home' ? 'home' : ''}"
          style="width:${w}px"
        >${name}</div>`)}
        <div class="search">
          <svg class="ico" width="16" height="16" viewBox="0 0 16 16">
            <circle cx="10" cy="6" r="5" fill="none" stroke="#555"/>
            <path d="M6.500 9.500L1 15" stroke="#555"/>
          </svg>
          <span>Search</span>
        </div>
        <div class="share-btns">
          <div class="share a">
            <svg class="ico" width="15" height="14" viewBox="0 0 15 14">
              <path d="M5 5.500H1.500v8h10V9M5 9c0-4 3-5 6-5V1.500l3.500 3.500L11 8.500V6C8 6 6 7 5 9z" fill="none" stroke="#217346"/>
            </svg>
            Share
          </div>
          <div class="share b">
            <svg class="ico" width="14" height="13" viewBox="0 0 14 13">
              <path d="M.5.5h13v9H6L3 12.500V9.500H.5z" fill="none" stroke="#217346"/>
            </svg>
            Comments
          </div>
        </div>
      </div>

      ${this.ribbon()}

      <div class="fbar">
        <div class="fbox namebox"><span>DAVERAGE</span>${caret('')}</div>
        <div class="dots"><i></i><i></i><i></i></div>
        <div class="fbox fxbox">
          <svg class="ico" width="13" height="13" viewBox="0 0 13 13"><path d="M1.500 1.500l10 10M11.500 1.500l-10 10" stroke="#666" stroke-width="1.400"/></svg>
          <svg class="ico" width="14" height="12" viewBox="0 0 14 12"><path d="M1 6l4 5 8-10" fill="none" stroke="#666" stroke-width="2"/></svg>
          <span class="fx">fx</span>
        </div>
        <div class="fbox formula">
          <span>=INDEX(PPT156_Data!C:C,MATCH<span class="p-red">(</span>MIN<span class="p-purple">(</span>ABS<span class="p-green">(</span>PPT156_Data!B:B-<span class="p-blue">W25</span><span class="p-green">)</span><span class="p-purple">)</span>,ABS<span class="p-purple">(</span>PPT156_Data!B:B-<span class="p-blue">W25</span><span class="p-purple">)</span>,1<span class="p-red">)</span>)<span class="cursor"></span></span>
          <svg class="ico" width="10" height="6" viewBox="0 0 10 6"><path d="M1 1l4 4 4-4" fill="none" stroke="#555" stroke-width="1.500"/></svg>
        </div>
      </div>

      <div class="workarea">
        <div class="sheetwrap">
          <div class="colhead">
            <div class="corner">
              <svg width="9" height="9" viewBox="0 0 9 9"><path d="M9 0v9H0z" fill="#b5b5b5"/></svg>
            </div>
            ${COL_NAMES.map((n) => html`<div class="ch ${n === 'Y' ? 'on' : ''}" style="width:${colWidth(n)}px">${n}</div>`)}
          </div>
          <div class="sheetbody">
            <div class="rowhead">
              ${ROW_HEIGHTS.map((h, i) => html`<div class="rh ${i === 21 ? 'on' : ''}" style="height:${h}px">${i + 1}</div>`)}
            </div>
            <div class="canvas">
              <div class="board">
                <div class="plots">${this.leftChart()}${this.lowChart()}</div>
                ${this.tables()}
              </div>
            </div>
          </div>
        </div>
        <div class="vscroll">
          <div class="vbtn"><svg width="7" height="4" viewBox="0 0 7 4"><path d="M0 4l3.500-4L7 4z" fill="#777"/></svg></div>
          <div class="vthumb"></div>
          <div class="vbtn down"><svg width="7" height="4" viewBox="0 0 7 4"><path d="M0 0l3.500 4L7 0z" fill="#777"/></svg></div>
        </div>
      </div>

      <div class="sheettabs">
        <div class="tnav">
          <svg width="4" height="7" viewBox="0 0 4 7"><path d="M4 0L0 3.500 4 7z" fill="#b5b5b5"/></svg>
          <svg width="4" height="7" viewBox="0 0 4 7"><path d="M0 0l4 3.500L0 7z" fill="#b5b5b5"/></svg>
        </div>
        <div class="stab on" style="width:105px">PPT156_Plots</div>
        <div class="stab" style="width:103px">PPT156_Data</div>
        <div class="stab" style="width:103px">PPT159_Data</div>
        <div class="stab" style="width:104px">Original_Test</div>
        <svg class="plus" viewBox="0 0 16 16">
          <circle cx="8" cy="8" r="7.300" fill="none" stroke="#bdbdbd"/>
          <path d="M8 4v8M4 8h8" stroke="#bdbdbd" stroke-width="1.500"/>
        </svg>
        <div class="hscroll">
          <div class="hdots"><i></i><i></i><i></i></div>
          <div class="hbtn"><svg width="4" height="7" viewBox="0 0 4 7"><path d="M4 0L0 3.500 4 7z" fill="#555"/></svg></div>
          <div class="htrack"></div>
          <div class="hthumb"></div>
          <div class="hbtn"><svg width="4" height="7" viewBox="0 0 4 7"><path d="M0 0l4 3.500L0 7z" fill="#555"/></svg></div>
        </div>
      </div>

      <div class="status">
        <span>Edit</span>
        <svg class="ico macro" width="13" height="15" viewBox="0 0 13 15">
          <circle cx="3" cy="3" r="2.500" fill="#555"/>
          <path d="M6 1h7v4H6z" fill="#555"/>
          <path d="M.5 6.500h12v8H.5zM3 9h1M6 9h1M9 9h1M3 12h1M6 12h1M9 12h1" fill="none" stroke="#555"/>
        </svg>
        <div class="views">
          <svg class="ico" width="14" height="14" viewBox="0 0 14 14">
            <path d="M.5.5h13v13H.5zM.5 5h13M.5 9.500h13M5 .5v13M9.500.5v13" fill="none" stroke="#666"/>
          </svg>
          <svg class="ico" width="13" height="14" viewBox="0 0 13 14">
            <path d="M.5.5h12v13H.5zM3.500 3.500h6v7h-6zM3.500 6h6M3.500 8.500h6" fill="none" stroke="#666"/>
          </svg>
          <svg class="ico" width="14" height="14" viewBox="0 0 14 14">
            <path d="M.5 13.500V.5h13v13zM4.500.5v8h5v-8M.5 8.500h4M9.500 8.500h4" fill="none" stroke="#666"/>
          </svg>
          <div class="zoomer">
            <svg class="ico" width="116" height="11" viewBox="0 0 122 11">
              <path d="M0 5.500h5" stroke="#555" stroke-width="2"/>
              <path d="M9 5.500h103" stroke="#b5b5b5"/>
              <path d="M60 2.500v6" stroke="#b5b5b5"/>
              <path d="M115 5.500h7M118.500 2v7" stroke="#555" stroke-width="2"/>
            </svg>
            <span class="pct">85%</span>
          </div>
        </div>
      </div>
      <div class="strip"><i></i></div>
    `
  }
}
